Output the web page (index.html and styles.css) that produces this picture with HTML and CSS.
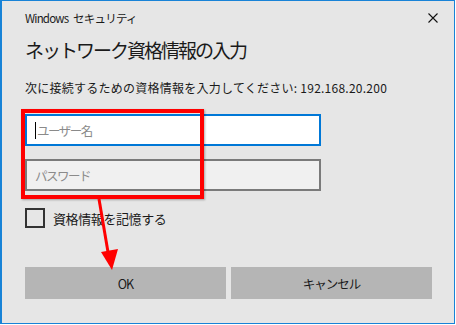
FILE: index.html
```html
<!DOCTYPE html>
<html lang="ja">
<head>
<meta charset="utf-8">
<link rel="stylesheet" href="styles.css">
</head>
<body>
<div class="window">
  <div class="titlebar">
    <span class="title">Windows セキュリティ</span>
    <svg class="close" width="10" height="10" viewBox="0 0 10 10"><path d="M0.5 0.5L9.5 9.5M9.5 0.5L0.5 9.5" stroke="#111" stroke-width="1.1"/></svg>
  </div>
  <h1 class="heading">ネットワーク資格情報の入力</h1>
  <p class="message">次に接続するための資格情報を入力してください: 192.168.20.200</p>
  <div class="fields">
    <div class="field focused"><span class="caret"></span><span class="ph">ユーザー名</span></div>
    <div class="field"><span class="ph">パスワード</span></div>
  </div>
  <label class="remember"><span class="box"></span><span>資格情報を記憶する</span></label>
  <div class="buttons">
    <div class="btn">OK</div>
    <div class="btn">キャンセル</div>
  </div>
  <div class="highlight"></div>
  <svg class="arrow" width="456" height="325" viewBox="0 0 456 325">
    <line x1="99" y1="199" x2="109" y2="258" stroke="#f00" stroke-width="3"/>
    <polygon points="101,252 118,249 112,270" fill="#f00"/>
  </svg>
</div>
</body>
</html>
```
FILE: styles.css
```css
* { box-sizing: border-box; }
html, body { margin: 0; padding: 0; background: #fff; }
body { font-family: "Noto Sans CJK JP", "Noto Sans", sans-serif; color: #1a1a1a; }
.window {
  position: relative;
  width: 455px;
  height: 324px;
  background: #e6e6e6;
  border: 1px solid #1883d7;
  border-left-width: 2px;
  padding: 0 0 0 23px;
  display: flex;
  flex-direction: column;
}
.titlebar {
  display: flex;
  align-items: center;
  justify-content: space-between;
  height: 33px;
  padding-right: 16px;
}
.title { font-size: 11.5px; letter-spacing: -0.8px; word-spacing: 3px; }
.close { display: block; }
.heading {
  margin: 3px 0 0;
  font-size: 19px;
  font-weight: 400;
  letter-spacing: -2px;
  line-height: 26px;
}
.message {
  margin: 17px 0 0;
  font-size: 12px;
  letter-spacing: 0.25px;
  line-height: 16px;
}
.fields {
  display: flex;
  flex-direction: column;
  gap: 13px;
  margin-top: 18px;
}
.field {
  width: 296px;
  height: 32px;
  border: 2px solid #7a7a7a;
  background: #f0f0f0;
  display: flex;
  align-items: center;
  padding-left: 8px;
  font-size: 12.5px;
  color: #8a8a8a;
}
.field.focused { border-color: #0078d7; background: #fff; }
.caret { width: 1px; height: 17px; background: #000; margin-right: 1px; }
.ph { letter-spacing: -1.5px; }
.remember {
  display: flex;
  align-items: center;
  gap: 8px;
  margin-top: 17px;
  font-size: 13px;
  letter-spacing: -0.4px;
}
.box { width: 20px; height: 20px; border: 2px solid #333; }
.buttons {
  display: flex;
  gap: 5px;
  margin-top: 39px;
}
.btn {
  width: 201px;
  height: 32px;
  background: #b5b5b5;
  display: flex;
  align-items: center;
  justify-content: center;
  font-size: 12.5px;
  letter-spacing: -1px;
}
.highlight {
  position: absolute;
  left: 19px;
  top: 108px;
  width: 183px;
  height: 90px;
  border: 4px solid #ff0000;
  box-shadow: 1px 1px 2px rgba(0,0,0,0.3);
}
.arrow { position: absolute; left: -2px; top: -1px; pointer-events: none; }
```
